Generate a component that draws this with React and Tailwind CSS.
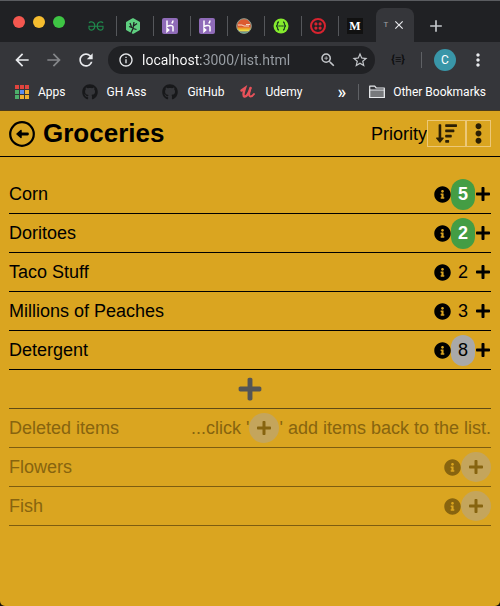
import React from "react";
import { FaPlus, FaInfoCircle, FaSortAmountDown, FaEllipsisV, FaGithub } from "react-icons/fa";
import { MdArrowBack, MdArrowForward, MdRefresh, MdInfoOutline, MdZoomIn, MdStarBorder, MdMoreVert, MdClose, MdAdd } from "react-icons/md";

const items = [
  { name: "Corn", priority: 5, badge: "bg-[#449d44] font-bold text-white" },
  { name: "Doritoes", priority: 2, badge: "bg-[#449d44] font-bold text-white" },
  { name: "Taco Stuff", priority: 2, badge: "text-black" },
  { name: "Millions of Peaches", priority: 3, badge: "text-black" },
  { name: "Detergent", priority: 8, badge: "bg-[#a9a9a9] text-black" },
];

const deletedItems = ["Flowers", "Fish"];

function GeeksIcon() {
  return (
    <svg viewBox="0 0 16 16" className="size-4" fill="none" stroke="#1f8a4c" strokeWidth="1.100">
      <path d="M1 5C2 3.300 6.800 3 6.800 8S2 12.800 1 10.500V8.200h14v2.300c-1 2.300-5.800 2.500-5.800-2.500S14 3.300 15 5" />
    </svg>
  );
}

function TreeIcon() {
  return (
    <svg viewBox="0 0 16 16" className="size-4">
      <path d="M8 1.200 14 4.600v6.800L8 14.800 2 11.400V4.600z" fill="#5fcf80" stroke="#5fcf80" strokeWidth="2" strokeLinejoin="round" />
      <path d="M5.500 16 8 10.500 9 4M8 10 4 8.500M8.500 8l3.500-2.500M8 10.500l3.500 1M5 5l1.500 4" fill="none" stroke="#202124" strokeWidth="1.300" />
    </svg>
  );
}

function HerokuIcon() {
  return (
    <svg viewBox="0 0 16 16" className="size-4">
      <rect width="16" height="16" rx="2" fill="#8f6bb8" />
      <path d="M5 2.500v6.200c2-1 6-2 6 .3v4.500M11 2.500c0 1.200-.5 2.200-1.300 3M5 10.500v3l1.700-1.500z" fill="none" stroke="#fff" strokeWidth="1.500" />
    </svg>
  );
}

function SunsetIcon() {
  return (
    <svg viewBox="0 0 16 16" className="size-4">
      <clipPath id="sunset"><circle cx="8" cy="8" r="7.500" /></clipPath>
      <g clipPath="url(#sunset)">
        <rect width="16" height="16" fill="#dc5a30" />
        <path d="M0 9.500h16V12H0z" fill="#f0a028" />
        <path d="M0 11.500h16v2H0z" fill="#e8dc48" />
        <path d="M0 13.500h16V16H0z" fill="#5fa392" />
        <path d="M2 7h4l2 1h5M10 6.500h4" stroke="#f6d9c4" strokeWidth="1" fill="none" />
      </g>
      <circle cx="8" cy="8" r="7.300" fill="none" stroke="#7f9d92" />
    </svg>
  );
}

function SwaggerIcon() {
  return (
    <svg viewBox="0 0 16 16" className="size-4">
      <circle cx="8" cy="8" r="7.500" fill="#85ea2d" />
      <path d="M6 4C4.500 4 4.500 5 4.500 6S4 8 3 8c1 0 1.500 1 1.500 2s0 2 1.500 2M10 4c1.500 0 1.500 1 1.500 2S12 8 13 8c-1 0-1.500 1-1.500 2s0 2-1.500 2" fill="none" stroke="#1b4022" strokeWidth="1.300" />
      <path d="M5.500 8h1.200M7.400 8h1.200M9.300 8h1.200" stroke="#1b4022" strokeWidth="1.300" />
    </svg>
  );
}

function TwilioIcon() {
  return (
    <svg viewBox="0 0 16 16" className="size-4" fill="#d8232f">
      <circle cx="8" cy="8" r="7" fill="none" stroke="#d8232f" strokeWidth="2" />
      <circle cx="5.900" cy="5.900" r="1.600" />
      <circle cx="10.100" cy="5.900" r="1.600" />
      <circle cx="5.900" cy="10.100" r="1.600" />
      <circle cx="10.100" cy="10.100" r="1.600" />
    </svg>
  );
}

function MediumIcon() {
  return <span className="flex size-4 items-center justify-center bg-[#111] font-['Liberation_Serif',serif] text-xs font-bold text-white">M</span>;
}

function AppsIcon() {
  return (
    <svg viewBox="0 0 14 14" className="size-[14px]">
      <path d="M0 0h4v4H0zM5 0h4v4H5zM10 0h4v4h-4z" fill="#e0443e" />
      <path d="M0 5h4v4H0z" fill="#4caf6a" />
      <path d="M5 5h4v4H5z" fill="#5b8def" />
      <path d="M10 5h4v4h-4z" fill="#f0b030" />
      <path d="M0 10h4v4H0z" fill="#4caf6a" />
      <path d="M5 10h4v4H5zM10 10h4v4h-4z" fill="#f0b030" />
    </svg>
  );
}

function UdemyIcon() {
  return (
    <svg viewBox="0 0 16 16" className="size-4" fill="none" stroke="#e8525a" strokeLinecap="round">
      <path d="M1.500 6.500 5 4C4 7 2.500 12 4.500 12.500S9 9 10.500 4" strokeWidth="2.400" />
      <path d="M10.500 4C9.500 7.500 8 12.500 10.500 12.500c1.500 0 2.500-1 3.500-2.500" strokeWidth="2" />
    </svg>
  );
}

function FolderIcon() {
  return (
    <svg viewBox="0 0 16 14" className="h-[14px] w-4" strokeWidth="1.200" stroke="#e8eaed" strokeLinejoin="round">
      <path d="M.7 12.500V1.200h5l1.500 1.800h8.100v9.500z" fill="none" />
      <path d="M.7 12.500V5h14.600v7.500z" fill="#77797c" />
    </svg>
  );
}

function BackIcon() {
  return (
    <svg viewBox="0 0 26 26" className="size-[26px]" fill="none" stroke="#000" strokeWidth="2.200">
      <circle cx="13" cy="13" r="11.800" />
      <path d="M11 13h7.500" strokeWidth="2.800" strokeLinecap="round" />
      <path d="M12 9.500v7L8 13z" fill="#000" strokeWidth="1.500" strokeLinejoin="round" />
    </svg>
  );
}

const tabs = [
  ["GeeksforGeeks", GeeksIcon],
  ["Treehouse", TreeIcon],
  ["Heroku", HerokuIcon],
  ["Heroku dashboard", HerokuIcon],
  ["Sunset", SunsetIcon],
  ["Swagger", SwaggerIcon],
  ["Twilio", TwilioIcon],
  ["Medium", MediumIcon],
];

function BrowserChrome() {
  return (
    <div className="border-b border-[#4a3b1c] bg-[#35363a] font-['Roboto',sans-serif] text-[#e8eaed]">
      <div className="flex h-[42px] border-t border-[#5a5c60] bg-[#202124]">
        <div className="flex w-20 items-center gap-2 pl-[13px]">
          <button aria-label="Close window" className="size-3 rounded-full bg-[#f4574f]" />
          <button aria-label="Minimize window" className="size-3 rounded-full bg-[#f6bd2f]" />
          <button aria-label="Zoom window" className="size-3 rounded-full bg-[#3ec544]" />
        </div>
        <div className="flex items-center pt-2">
          {tabs.map(([label, Icon], i) => (
            <button
              key={label}
              aria-label={label}
              className={`flex h-5 w-[37px] items-center justify-center border-r pr-1 ${i < tabs.length - 1 ? "border-[#55575b]" : "border-transparent"}`}
            >
              <Icon />
            </button>
          ))}
        </div>
        <div className="mt-[7px] flex w-[38px] items-center justify-center gap-1 rounded-t-lg bg-[#35363a]">
          <span className="text-[8px] leading-3 text-[#a0a2a6]">T</span>
          <button aria-label="Close tab"><MdClose className="size-[14px]" /></button>
        </div>
        <button aria-label="New tab" className="ml-3 pt-2"><MdAdd className="size-5 text-[#c4c7cb]" /></button>
      </div>
      <div className="flex h-9 items-center px-3">
        <button aria-label="Back" className="mr-3"><MdArrowBack className="size-5" /></button>
        <button aria-label="Forward" className="mr-3"><MdArrowForward className="size-5 text-[#85878a]" /></button>
        <button aria-label="Reload" className="mr-3"><MdRefresh className="size-5" /></button>
        <div className="flex h-7 min-w-0 flex-1 items-center rounded-full bg-[#202124] pr-[6px] pl-[10px]">
          <MdInfoOutline className="mr-2 size-4 shrink-0" />
          <input
            aria-label="Address"
            defaultValue="localhost:3000/list.html"
            className="min-w-0 flex-1 bg-[linear-gradient(90deg,#ffffff_59px,#9aa0a6_59px)] bg-clip-text text-sm text-transparent outline-none"
          />
          <button aria-label="Page zoom" className="mr-[14px]"><MdZoomIn className="size-[18px] text-[#c4c7cb]" /></button>
          <button aria-label="Bookmark"><MdStarBorder className="size-[18px] text-[#c4c7cb]" /></button>
        </div>
        <button aria-label="JSON viewer" className="mx-4 text-[11px] font-bold text-[#0c0d0e]">{"{≡}"}</button>
        <span className="mr-3 h-4 w-px bg-[#5f6165]" />
        <button className="mr-3 size-[22px] rounded-full bg-[#3996a8] text-xs text-white">C</button>
        <button aria-label="Menu"><MdMoreVert className="size-5" /></button>
      </div>
      <div className="flex h-8 items-center pr-[14px] pb-1 pl-[15px] text-xs text-white">
        <a href="#apps" className="mr-4 flex items-center gap-[9px]"><AppsIcon />Apps</a>
        <a href="#gh-ass" className="mr-4 flex items-center gap-[9px]"><FaGithub className="size-4 text-[#17181a]" />GH Ass</a>
        <a href="#github" className="mr-4 flex items-center gap-[9px]"><FaGithub className="size-4 text-[#17181a]" />GitHub</a>
        <a href="#udemy" className="flex items-center gap-[9px]"><UdemyIcon />Udemy</a>
        <button aria-label="More bookmarks" className="mr-3 ml-auto text-lg leading-4 font-medium">»</button>
        <span className="mr-[10px] h-4 w-px bg-[#5f6165]" />
        <a href="#other" className="flex items-center gap-2"><FolderIcon />Other Bookmarks</a>
      </div>
    </div>
  );
}

export default function App() {
  return (
    <div className="flex min-h-screen flex-col bg-[#1a1206]">
      <div className="flex flex-1 flex-col overflow-hidden rounded-b-[5px] bg-[#daa520] font-['Liberation_Sans',Arial,sans-serif] text-lg text-black">
        <BrowserChrome />
        <header className="flex h-[46px] items-center border-b border-black px-[9px]">
          <button aria-label="Back to lists" className="mr-2"><BackIcon /></button>
          <h1 className="text-[26px] font-bold">Groceries</h1>
          <span className="ml-auto">Priority</span>
          <button aria-label="Sort descending" className="flex h-[27px] w-[39px] items-center justify-center border border-[#ecc878]">
            <FaSortAmountDown className="size-[21px] text-[#2b1f05]" />
          </button>
          <button aria-label="List menu" className="flex h-[27px] w-[25px] items-center justify-center border border-[#ecc878]">
            <FaEllipsisV className="size-[21px] text-[#2b1f05]" />
          </button>
        </header>
        <main className="px-[9px] pt-[18px]">
          <ul>
            {items.map((item) => (
              <li key={item.name} className="flex h-[39px] items-center border-b border-black">
                <span className="mr-auto">{item.name}</span>
                <button aria-label={`About ${item.name}`}><FaInfoCircle className="size-[17px]" /></button>
                <span className={`flex h-[31px] w-6 items-center justify-center rounded-full ${item.badge}`}>{item.priority}</span>
                <button aria-label={`Raise ${item.name}`}><FaPlus className="size-4" /></button>
              </li>
            ))}
          </ul>
          <div className="flex h-[39px] items-center justify-center border-b border-[#5f4a15]">
            <button aria-label="Add item"><FaPlus className="size-[26px] text-[#555555]" /></button>
          </div>
          <section className="text-[#87640f]">
            <div className="flex h-[39px] items-center border-b border-[#7d5d10]">
              <h2 className="mr-auto">Deleted items</h2>
              <p className="flex items-center whitespace-pre">
                ...click '
                <span className="flex size-[30px] items-center justify-center rounded-full bg-[#c4a55c]"><FaPlus className="size-4" /></span>
                {"' add items back to the list."}
              </p>
            </div>
            <ul>
              {deletedItems.map((name) => (
                <li key={name} className="flex h-[39px] items-center border-b border-[#7d5d10]">
                  <span className="mr-auto">{name}</span>
                  <button aria-label={`About ${name}`}><FaInfoCircle className="size-[17px]" /></button>
                  <button aria-label={`Restore ${name}`} className="flex size-[30px] items-center justify-center rounded-full bg-[#c4a55c]">
                    <FaPlus className="size-4" />
                  </button>
                </li>
              ))}
            </ul>
          </section>
        </main>
      </div>
    </div>
  );
}
